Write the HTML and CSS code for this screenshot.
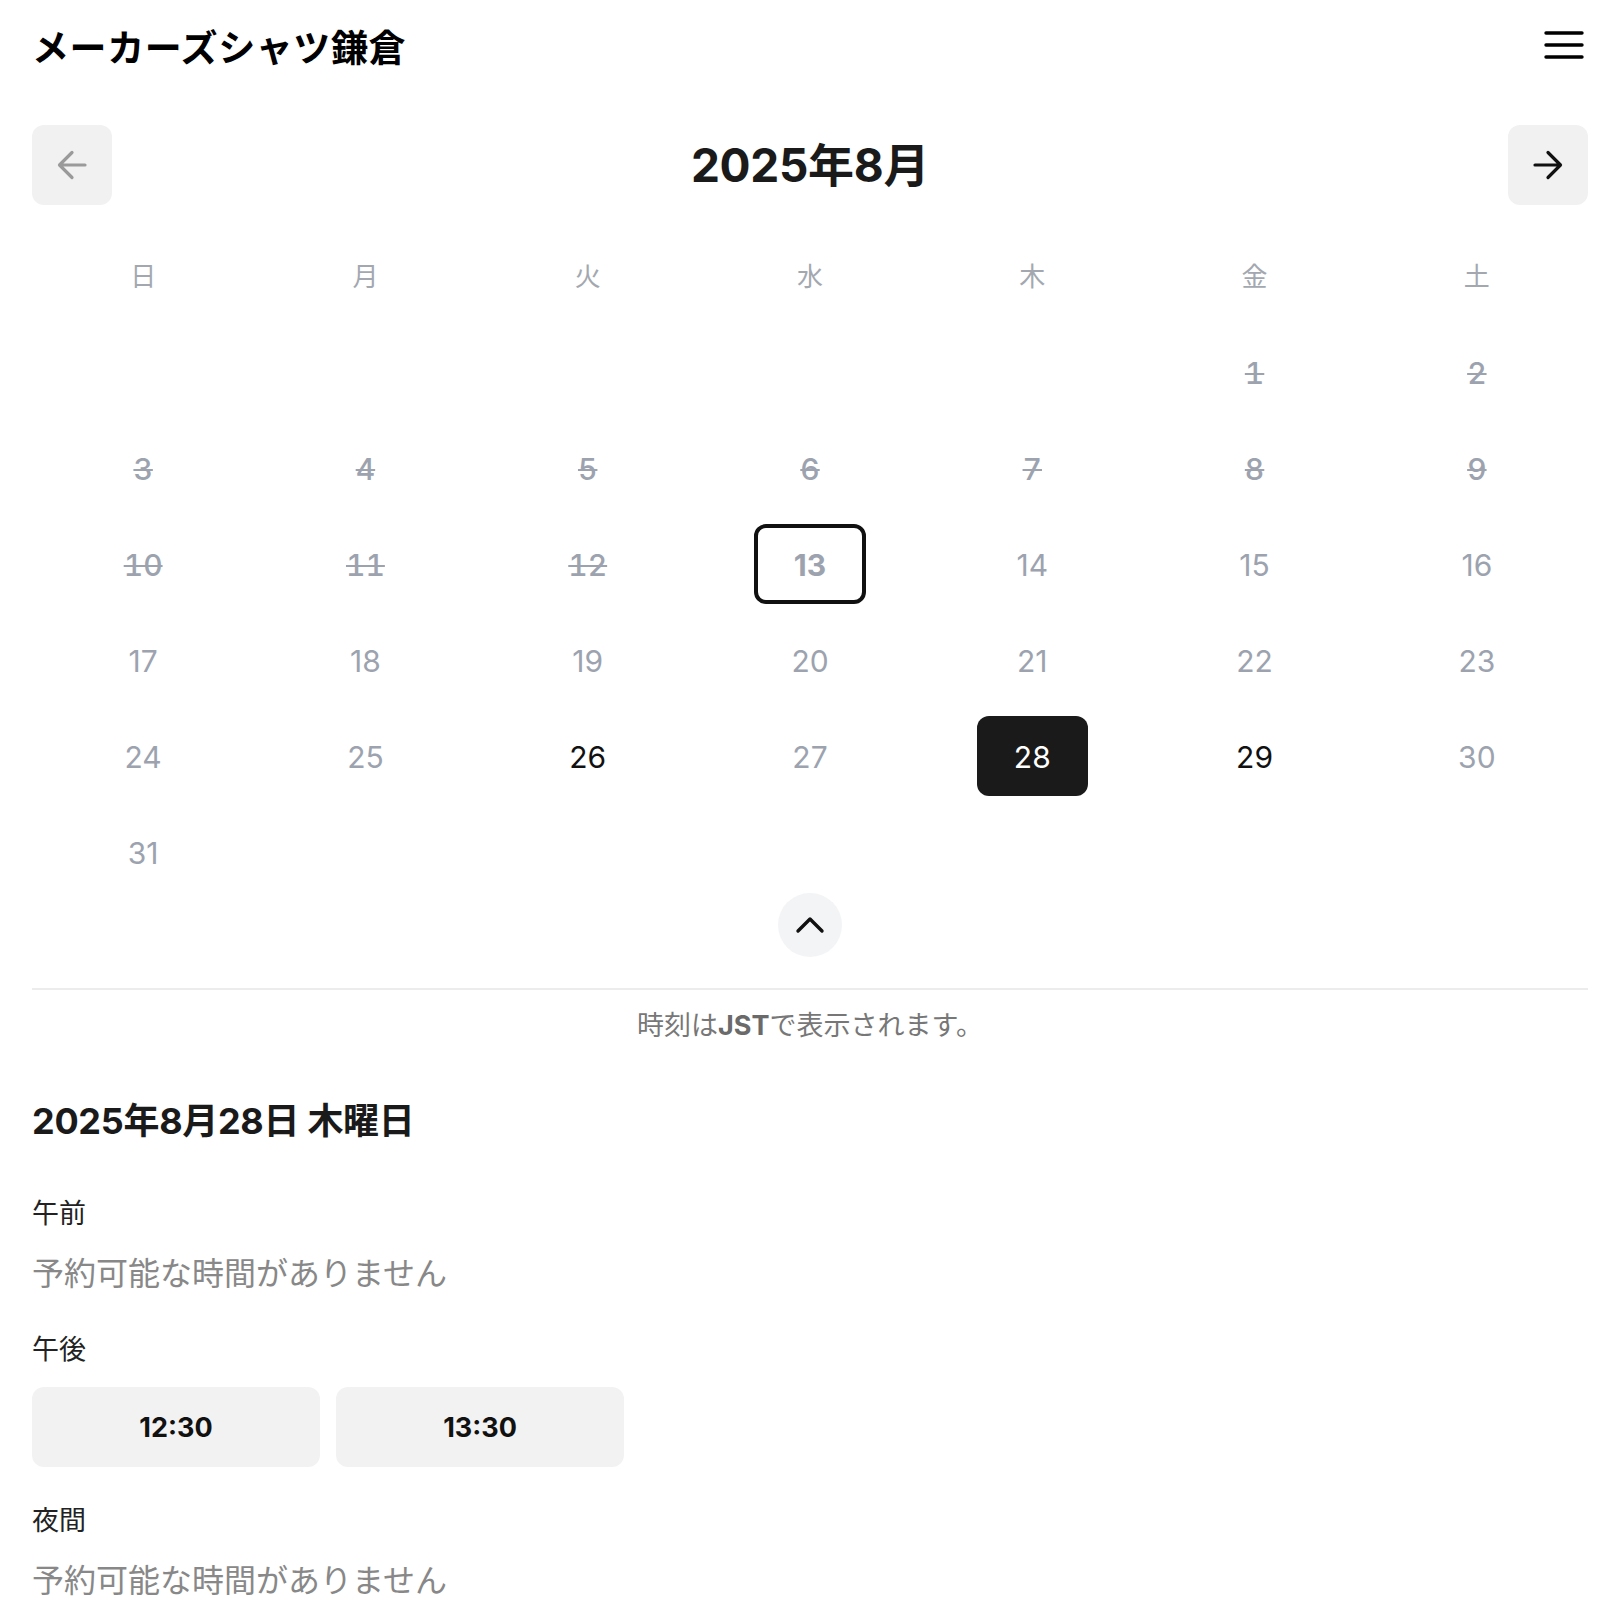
FILE: index.html
```html
<!DOCTYPE html>
<html lang="ja">
<head>
<meta charset="utf-8">
<title>メーカーズシャツ鎌倉</title>
<link rel="stylesheet" href="styles.css">
</head>
<body>
<div class="page">
  <header class="topbar">
    <h1 class="brand">メーカーズシャツ鎌倉</h1>
    <button class="menu" aria-label="メニュー">
      <svg width="40" height="28" viewBox="0 0 40 28"><path d="M2 2h36M2 14h36M2 26h36" stroke="#000" stroke-width="3.4" stroke-linecap="round" fill="none"/></svg>
    </button>
  </header>

  <section class="calendar">
    <div class="cal-nav">
      <button class="nav-btn disabled" aria-label="前の月">
        <svg width="32" height="32" viewBox="0 0 32 32"><path d="M29 16H4M16 3.5L3.5 16L16 28.5" stroke="#9a9a9a" stroke-width="3.2" stroke-linecap="round" stroke-linejoin="round" fill="none"/></svg>
      </button>
      <h2 class="month">2025年8月</h2>
      <button class="nav-btn" aria-label="次の月">
        <svg width="32" height="32" viewBox="0 0 32 32"><path d="M3 16h25M16 3.5L28.5 16L16 28.5" stroke="#111" stroke-width="3.2" stroke-linecap="round" stroke-linejoin="round" fill="none"/></svg>
      </button>
    </div>

    <div class="grid">
      <div class="wd">日</div><div class="wd">月</div><div class="wd">火</div><div class="wd">水</div><div class="wd">木</div><div class="wd">金</div><div class="wd">土</div>

      <div class="cell"></div><div class="cell"></div><div class="cell"></div><div class="cell"></div><div class="cell"></div>
      <div class="cell"><span class="day past">1</span></div>
      <div class="cell"><span class="day past">2</span></div>

      <div class="cell"><span class="day past">3</span></div>
      <div class="cell"><span class="day past">4</span></div>
      <div class="cell"><span class="day past">5</span></div>
      <div class="cell"><span class="day past">6</span></div>
      <div class="cell"><span class="day past">7</span></div>
      <div class="cell"><span class="day past">8</span></div>
      <div class="cell"><span class="day past">9</span></div>

      <div class="cell"><span class="day past">10</span></div>
      <div class="cell"><span class="day past">11</span></div>
      <div class="cell"><span class="day past">12</span></div>
      <div class="cell"><span class="day today">13</span></div>
      <div class="cell"><span class="day">14</span></div>
      <div class="cell"><span class="day">15</span></div>
      <div class="cell"><span class="day">16</span></div>

      <div class="cell"><span class="day">17</span></div>
      <div class="cell"><span class="day">18</span></div>
      <div class="cell"><span class="day">19</span></div>
      <div class="cell"><span class="day">20</span></div>
      <div class="cell"><span class="day">21</span></div>
      <div class="cell"><span class="day">22</span></div>
      <div class="cell"><span class="day">23</span></div>

      <div class="cell"><span class="day">24</span></div>
      <div class="cell"><span class="day">25</span></div>
      <div class="cell"><span class="day open">26</span></div>
      <div class="cell"><span class="day">27</span></div>
      <div class="cell"><span class="day selected">28</span></div>
      <div class="cell"><span class="day open">29</span></div>
      <div class="cell"><span class="day">30</span></div>

      <div class="cell"><span class="day">31</span></div>
    </div>

    <div class="collapse-row">
      <button class="collapse" aria-label="閉じる">
        <svg width="30" height="18" viewBox="0 0 30 18"><path d="M3 15L15 3L27 15" stroke="#111" stroke-width="3.4" stroke-linecap="round" stroke-linejoin="round" fill="none"/></svg>
      </button>
    </div>
  </section>

  <hr class="divider">
  <p class="tz">時刻は<b>JST</b>で表示されます。</p>

  <section class="slots">
    <h3 class="date">2025年8月28日 木曜日</h3>
    <div class="group first">
      <div class="label">午前</div>
      <div class="empty">予約可能な時間がありません</div>
    </div>
    <div class="group">
      <div class="label">午後</div>
      <div class="times">
        <button class="time">12:30</button>
        <button class="time">13:30</button>
      </div>
    </div>
    <div class="group">
      <div class="label">夜間</div>
      <div class="empty">予約可能な時間がありません</div>
    </div>
  </section>
</div>
</body>
</html>
```

FILE: styles.css
```css
* { box-sizing: border-box; }
html, body { margin: 0; padding: 0; background: #fff; }
body {
  font-family: "Inter", "Noto Sans CJK JP", sans-serif;
  color: #111;
}
button {
  font-family: inherit;
  border: 0;
  padding: 0;
  cursor: pointer;
}
.page {
  padding: 0 27px 0 32px;
}

/* header */
.topbar {
  height: 92px;
  display: flex;
  align-items: center;
  justify-content: space-between;
}
.brand {
  margin: 0;
  font-family: "Noto Sans CJK JP", sans-serif;
  font-size: 37px;
  font-weight: 700;
  line-height: 1.2;
  letter-spacing: 0.6px;
  color: #000;
}
.menu {
  background: transparent;
  width: 40px;
  height: 28px;
  display: flex;
  margin-top: -3px;
  margin-right: 4px;
}

/* calendar nav */
.cal-nav {
  margin-top: 33px;
  height: 80px;
  display: flex;
  align-items: center;
  justify-content: space-between;
}
.nav-btn {
  width: 80px;
  height: 80px;
  border-radius: 12px;
  background: #f1f1f1;
  display: flex;
  align-items: center;
  justify-content: center;
}
.month {
  margin: 0;
  font-size: 46px;
  font-weight: 700;
  line-height: 1;
  letter-spacing: -0.3px;
  color: #1a1a1a;
}

/* grid */
.grid {
  margin-top: 31px;
  display: grid;
  grid-template-columns: repeat(7, 1fr);
  grid-auto-rows: 80px;
  row-gap: 16px;
}
.wd {
  display: flex;
  align-items: center;
  justify-content: center;
  font-family: "Noto Sans CJK JP", sans-serif;
  font-size: 26px;
  font-weight: 400;
  color: #a3a8b0;
  padding-bottom: 3px;
}
.cell {
  display: flex;
  align-items: center;
  justify-content: center;
}
.day {
  width: 50%;
  height: 80px;
  display: flex;
  align-items: center;
  justify-content: center;
  border-radius: 12px;
  font-size: 30px;
  font-weight: 400;
  color: #9ca3af;
  padding-top: 2px;
}
.day.past {
  font-weight: 500;
  text-decoration: line-through;
  text-decoration-thickness: 2px;
  font-feature-settings: "tnum";
}
.day.today {
  border: 4.5px solid #111;
  font-weight: 700;
}
.day.open {
  color: #111;
}
.day.selected {
  background: #1a1a1a;
  color: #fff;
}

.collapse-row {
  display: flex;
  justify-content: center;
  margin-top: 1px;
}
.collapse {
  width: 64px;
  height: 64px;
  border-radius: 50%;
  background: #f3f4f6;
  display: flex;
  align-items: center;
  justify-content: center;
}

.divider {
  margin: 31px 0 0;
  border: 0;
  border-top: 2px solid #ececec;
  height: 0;
}
.tz {
  margin: 18px 0 0;
  text-align: center;
  font-size: 27px;
  line-height: 36px;
  color: #777;
}
.tz b {
  font-weight: 700;
  color: #6a6a6a;
}

/* slots */
.slots {
  margin-top: 55px;
}
.date {
  margin: 0;
  font-size: 36px;
  line-height: 44px;
  font-weight: 700;
  letter-spacing: -0.3px;
  color: #1a1a1a;
}
.group {
  margin-top: 36px;
}
.group.first {
  margin-top: 53px;
}
.label {
  font-size: 27px;
  line-height: 36px;
  color: #222;
}
.empty {
  margin-top: 20px;
  font-size: 32px;
  line-height: 44px;
  color: #888;
}
.times {
  margin-top: 19px;
  display: flex;
  gap: 16px;
}
.time {
  width: 288px;
  height: 80px;
  border-radius: 12px;
  background: #f2f2f2;
  font-size: 27px;
  font-weight: 700;
  color: #111;
}
```
